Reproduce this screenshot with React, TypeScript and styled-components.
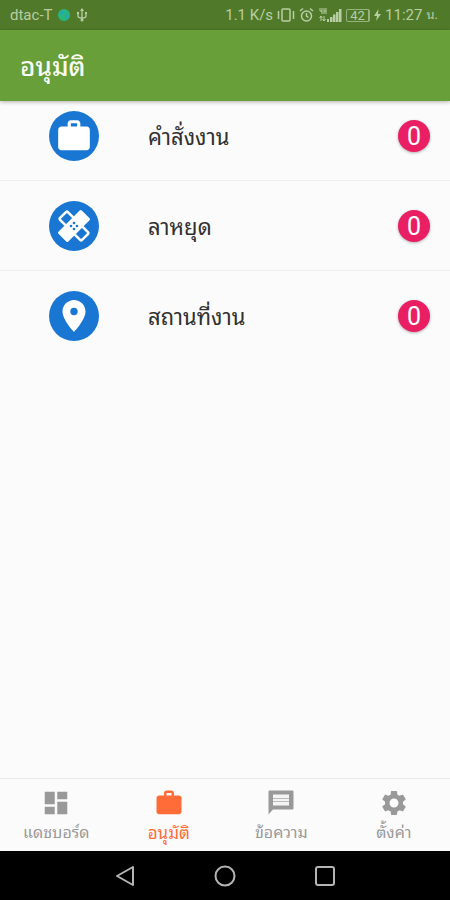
import React from "react";
import styled, { createGlobalStyle } from "styled-components";
import { MdDashboard, MdSettings, MdWork } from "react-icons/md";

const GlobalStyle = createGlobalStyle`
  *, *::before, *::after { box-sizing: border-box; }
  body {
    margin: 0;
    background: #fbfbfb;
    font-family: Roboto, "Noto Sans Thai Looped", "Noto Sans Thai", "Noto Sans", sans-serif;
  }
`;

const Screen = styled.div`
  display: flex;
  flex-direction: column;
  min-height: 100vh;
`;

const StatusBar = styled.div`
  display: flex;
  align-items: center;
  justify-content: space-between;
  height: 30px;
  padding: 0 12px 0 10px;
  background: #507a29;
  color: #b9cda5;
  font-size: 15px;
  line-height: 20px;
`;

const StatusGroup = styled.div<{ $gap: number }>`
  display: flex;
  align-items: center;
  gap: ${(p) => p.$gap}px;
`;

const Meridiem = styled.span`
  font-size: 13px;
`;

const AppBar = styled.header`
  display: flex;
  align-items: center;
  height: 71px;
  padding: 2px 20px 0;
  background: #689f38;
  box-shadow: 0 1px 4px rgba(0, 0, 0, 0.3);
`;

const Title = styled.h1`
  margin: 0;
  color: #f8fbf4;
  font-size: 26px;
  line-height: 36px;
  font-weight: 500;
`;

const List = styled.main`
  flex: 1;
`;

const Row = styled.button<{ $first?: boolean }>`
  display: flex;
  align-items: center;
  width: 100%;
  padding: ${(p) => (p.$first ? "10px" : "20px")} 20px 20px 49px;
  border: 0;
  background: none;
  font: inherit;
  text-align: left;

  & + & {
    box-shadow: 0 -1px 0 #efefef;
  }
`;

const Disc = styled.span`
  display: grid;
  place-items: center;
  width: 50px;
  height: 50px;
  border-radius: 50%;
  background: #1976d2;
  color: #fff;
`;

const Label = styled.span`
  flex: 1;
  margin-left: 49px;
  padding-top: 4px;
  color: #303030;
  font-size: 22px;
  line-height: 30px;
`;

const Count = styled.span`
  width: 32px;
  height: 32px;
  border-radius: 50%;
  background: #e91e63;
  box-shadow: 0 1px 3px rgba(0, 0, 0, 0.3);
  color: #fff;
  font-size: 25px;
  line-height: 33px;
  text-align: center;
`;

const Tabs = styled.nav`
  display: grid;
  grid-template-columns: repeat(4, 1fr);
  height: 73px;
  border-top: 1px solid #e8e8e8;
`;

const Tab = styled.button<{ $active?: boolean }>`
  display: flex;
  flex-direction: column;
  align-items: center;
  padding: 9px 0 0;
  border: 0;
  background: none;
  color: ${(p) => (p.$active ? "#ff6c37" : "#999")};
  font: inherit;
  font-size: ${(p) => (p.$active ? "17px" : "16px")};
  line-height: 30px;
`;

const SystemBar = styled.footer`
  display: flex;
  align-items: center;
  justify-content: center;
  gap: 76px;
  height: 49px;
  background: #000;
`;

const SystemButton = styled.button`
  display: flex;
  padding: 0;
  border: 0;
  background: none;
`;

const Bandage = () => (
  <svg width="38" height="38" viewBox="0 0 38 38" aria-hidden="true">
    <g transform="rotate(45 19 19)">
      <rect x="3.500" y="13.500" width="31" height="11" rx="1" fill="none" stroke="#fff" strokeWidth="2.5" />
      <rect x="12" y="2.500" width="14" height="33" rx="1.500" fill="#fff" />
    </g>
    <g fill="#1976d2">
      <circle cx="19" cy="16" r="1.300" />
      <circle cx="22" cy="19" r="1.300" />
      <circle cx="19" cy="22" r="1.300" />
      <circle cx="16" cy="19" r="1.300" />
    </g>
  </svg>
);

const Pin = () => (
  <svg width="38" height="38" viewBox="0 0 38 38" fill="#fff" fillRule="evenodd" aria-hidden="true">
    <path d="M19 3C12.700 3 7.500 8 7.500 14.500 7.500 23 19 35 19 35s11.500-12 11.500-20.500C30.500 8 25.300 3 19 3zm0 7.800a3.700 3.700 0 1 1 0 7.400 3.700 3.700 0 0 1 0-7.400z" />
  </svg>
);

const Message = () => (
  <svg width="30" height="30" viewBox="0 0 30 30" aria-hidden="true">
    <path d="M3.500 2.500h23a1 1 0 0 1 1 1v17a1 1 0 0 1-1 1H7l-4.500 5v-23a1 1 0 0 1 1-1z" fill="currentColor" />
    <path d="M7 6.500h16v11H7z" fill="#f4f4f4" />
    <path d="M7 10.500h16M7 13.500h16" stroke="#bbb" strokeWidth="1" />
  </svg>
);

const rows = [
  { label: "คำสั่งงาน", icon: <MdWork size={38} /> },
  { label: "ลาหยุด", icon: <Bandage /> },
  { label: "สถานที่งาน", icon: <Pin /> },
];

const tabs = [
  { label: "แดชบอร์ด", icon: <MdDashboard size={30} /> },
  { label: "อนุมัติ", icon: <MdWork size={30} />, active: true },
  { label: "ข้อความ", icon: <Message /> },
  { label: "ตั้งค่า", icon: <MdSettings size={30} /> },
];

const GlobeDot = () => (
  <svg width="14" height="14" viewBox="0 0 14 14" aria-hidden="true">
    <circle cx="7" cy="7" r="6" fill="#25b77c" />
    <path d="M3 4q3-3 5 0l-2 3-3-1zM8 8l3-2 1 2-3 4z" fill="#2ba6b0" />
  </svg>
);

const Usb = () => (
  <svg width="12" height="16" viewBox="0 0 12 16" fill="none" stroke="#b9cda5" strokeWidth="1.3" aria-hidden="true">
    <path d="M6 2v12M2 6v3q0 2 4 2 4 0 4-2V6" />
    <path d="M6 1l2 3H4z" fill="#b9cda5" stroke="none" />
    <circle cx="6" cy="13" r="1.5" fill="#b9cda5" stroke="none" />
    <circle cx="2" cy="6" r="1.2" fill="#b9cda5" stroke="none" />
    <path d="M9 5h2v2H9z" fill="#b9cda5" stroke="none" />
  </svg>
);

const Vibrate = () => (
  <svg width="18" height="16" viewBox="0 0 18 16" fill="none" stroke="#b9cda5" strokeWidth="1.5" aria-hidden="true">
    <rect x="5" y="2" width="8" height="12" rx="1" />
    <path d="M1.500 4v8M16.500 4v8" />
  </svg>
);

const Alarm = () => (
  <svg width="15" height="16" viewBox="0 0 15 16" fill="none" stroke="#b9cda5" strokeWidth="1.5" aria-hidden="true">
    <circle cx="7.500" cy="9" r="5" />
    <path d="M7.500 6v3l2 1.500M1 4l3-2.500M14 4l-3-2.500" />
  </svg>
);

const Signal = () => (
  <svg width="24" height="16" viewBox="0 0 24 16" fill="#b9cda5" aria-hidden="true">
    <path d="M9 12h2v3H9zM12 10h2.500v5H12zM15 7.500h2.500V15H15zM18 5h2.500v10H18zM21 2h2.500v13H21z" />
    <path d="M2 1v3h2V1M4 4v3M6 1v6M6 4h2M8 1v6M3 9v5M1.500 11L3 9l1.500 2M6 9v5M4.500 12L6 14l1.500-2" fill="none" stroke="#b9cda5" />
  </svg>
);

const BatteryBox = styled.span`
  width: 24px;
  height: 13px;
  border: 1px solid #98b17e;
  border-right-width: 2px;
  border-radius: 2px;
  font-size: 13px;
  line-height: 12px;
  text-align: center;
`;

const Bolt = () => (
  <svg width="7" height="12" viewBox="0 0 7 12" fill="#b9cda5" aria-hidden="true">
    <path d="M4.500 0L0 7h3l-1 5 5-7H4z" />
  </svg>
);

export default function App() {
  return (
    <Screen>
      <GlobalStyle />
      <StatusBar>
        <StatusGroup $gap={5}>
          <span>dtac-T</span>
          <GlobeDot />
          <Usb />
        </StatusGroup>
        <StatusGroup $gap={4}>
          <span>1.1 K/s</span>
          <Vibrate />
          <Alarm />
          <Signal />
          <BatteryBox>42</BatteryBox>
          <Bolt />
          <span>11:27</span>
          <Meridiem>น.</Meridiem>
        </StatusGroup>
      </StatusBar>
      <AppBar>
        <Title>อนุมัติ</Title>
      </AppBar>
      <List>
        {rows.map((row, i) => (
          <Row key={row.label} type="button" $first={i === 0}>
            <Disc>{row.icon}</Disc>
            <Label>{row.label}</Label>
            <Count>0</Count>
          </Row>
        ))}
      </List>
      <Tabs>
        {tabs.map((tab) => (
          <Tab key={tab.label} type="button" $active={tab.active} aria-current={tab.active ? "page" : undefined}>
            {tab.icon}
            <span>{tab.label}</span>
          </Tab>
        ))}
      </Tabs>
      <SystemBar>
        <SystemButton type="button" aria-label="Back">
          <svg width="24" height="24" viewBox="0 0 24 24" fill="none" stroke="#b4b4b4" strokeWidth="2" strokeLinejoin="round">
            <path d="M20 3v18L4 12z" />
          </svg>
        </SystemButton>
        <SystemButton type="button" aria-label="Home">
          <svg width="24" height="24" viewBox="0 0 24 24" fill="none" stroke="#b4b4b4" strokeWidth="2">
            <circle cx="12" cy="12" r="9.500" />
          </svg>
        </SystemButton>
        <SystemButton type="button" aria-label="Recent apps">
          <svg width="24" height="24" viewBox="0 0 24 24" fill="none" stroke="#b4b4b4" strokeWidth="2">
            <rect x="3" y="3" width="18" height="18" rx="2" />
          </svg>
        </SystemButton>
      </SystemBar>
    </Screen>
  );
}
